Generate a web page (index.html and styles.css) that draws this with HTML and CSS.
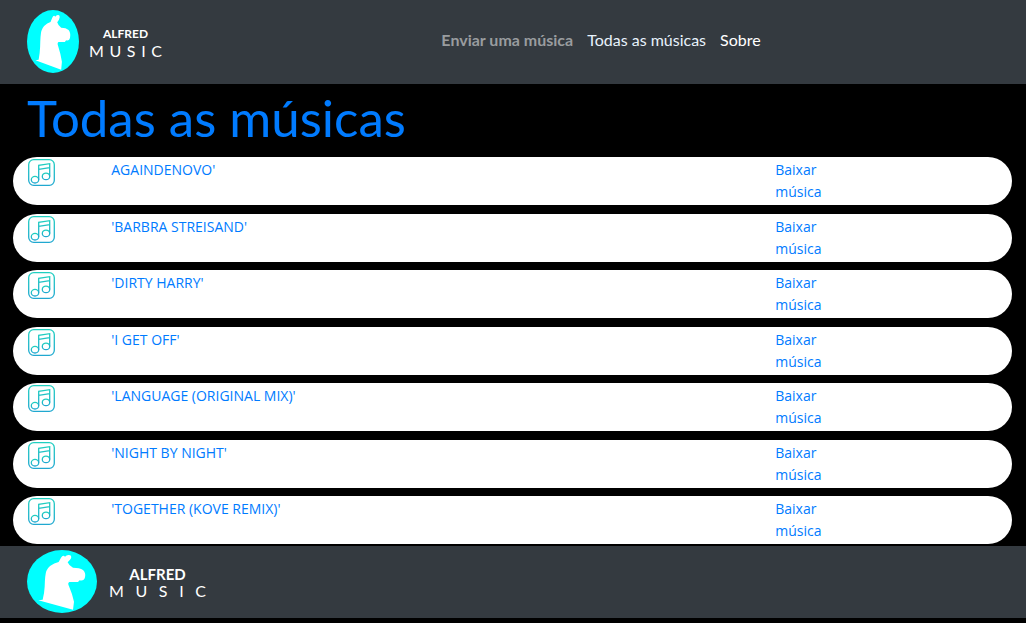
FILE: index.html
```
<!DOCTYPE html>
<html lang="pt-BR">
<head>
<meta charset="utf-8">
<meta name="viewport" content="width=device-width, initial-scale=1">
<title>Alfred Music</title>
<link rel="stylesheet" href="styles.css">
</head>
<body>
<svg class="symbols" aria-hidden="true">
  <defs>
    <linearGradient id="teal" x1="0" y1="0" x2="0" y2="1">
      <stop offset="0" stop-color="#20cfc0"/>
      <stop offset="1" stop-color="#20a8d0"/>
    </linearGradient>
    <symbol id="llama" viewBox="0 0 210 189" preserveAspectRatio="none">
      <ellipse cx="105" cy="94.5" rx="105" ry="94.5" fill="#00ffff"/>
      <path fill="#fff" d="M95 36 L102 23 Q108 14 114 20 Q120 13 130 16 Q136 22 129 29 L122 37 Q125 46 138 53 Q158 53 168 60 Q177 68 174 82 Q171 94 158 91 L153 96 H127 Q121 99 126 109 Q136 132 141 155 L138 179 L34 151 L47 149 Q52 130 53 110 Q54 74 58 63 Q66 44 95 36 Z"/>
    </symbol>
    <symbol id="note" viewBox="0 0 27 27">
      <g fill="none" stroke="url(#teal)" stroke-width="1.3">
        <rect x="0.7" y="0.7" width="25.6" height="25.6" rx="5"/>
        <ellipse cx="7" cy="20.7" rx="3.7" ry="3.3"/>
        <ellipse cx="18" cy="17.4" rx="3.7" ry="3.3"/>
        <path d="M10.7 20.7 V6.3 L21.7 4.7 V17.4 M10.7 10.3 L21.7 8.7"/>
      </g>
    </symbol>
  </defs>
</svg>

<header class="bar bar-top">
  <a class="brand" href="#" aria-label="Alfred Music">
    <svg class="mascot" aria-hidden="true"><use href="#llama"/></svg>
    <span class="wordmark"><span class="name">ALFRED</span><span class="tag"><span>M</span><span>U</span><span>S</span><span>I</span><span>C</span></span></span>
  </a>
  <nav class="nav">
    <a class="nav-link nav-send" href="#">Enviar uma música</a>
    <a class="nav-link nav-all" href="#">Todas as músicas</a>
    <a class="nav-link" href="#">Sobre</a>
  </nav>
</header>

<main class="content">
  <h1 class="title">Todas as músicas</h1>
  <ul class="songs">
    <li class="song"><svg class="note" aria-hidden="true"><use href="#note"/></svg><a class="song-name" href="#">AGAINDENOVO'</a><a class="download" href="#">Baixar música</a></li>
    <li class="song"><svg class="note" aria-hidden="true"><use href="#note"/></svg><a class="song-name" href="#">'BARBRA STREISAND'</a><a class="download" href="#">Baixar música</a></li>
    <li class="song"><svg class="note" aria-hidden="true"><use href="#note"/></svg><a class="song-name" href="#">'DIRTY HARRY'</a><a class="download" href="#">Baixar música</a></li>
    <li class="song"><svg class="note" aria-hidden="true"><use href="#note"/></svg><a class="song-name" href="#">'I GET OFF'</a><a class="download" href="#">Baixar música</a></li>
    <li class="song"><svg class="note" aria-hidden="true"><use href="#note"/></svg><a class="song-name" href="#">'LANGUAGE (ORIGINAL MIX)'</a><a class="download" href="#">Baixar música</a></li>
    <li class="song"><svg class="note" aria-hidden="true"><use href="#note"/></svg><a class="song-name" href="#">'NIGHT BY NIGHT'</a><a class="download" href="#">Baixar música</a></li>
    <li class="song"><svg class="note" aria-hidden="true"><use href="#note"/></svg><a class="song-name" href="#">'TOGETHER (KOVE REMIX)'</a><a class="download" href="#">Baixar música</a></li>
  </ul>
</main>

<footer class="bar bar-bottom">
  <a class="brand brand-wide" href="#" aria-label="Alfred Music">
    <svg class="mascot" aria-hidden="true"><use href="#llama"/></svg>
    <span class="wordmark"><span class="name">ALFRED</span><span class="tag"><span>M</span><span>U</span><span>S</span><span>I</span><span>C</span></span></span>
  </a>
</footer>
</body>
</html>
```
FILE: styles.css
```
* {
  box-sizing: border-box;
}

body {
  display: flex;
  flex-direction: column;
  min-height: 100vh;
  margin: 0;
  padding-bottom: 5px;
  background: #000;
  color: #007bff;
  font-family: "Trebuchet MS", Lato, sans-serif;
  font-size: 16px;
  line-height: 22px;
}

a {
  color: inherit;
  text-decoration: none;
}

.symbols {
  position: absolute;
  width: 0;
  height: 0;
}

.bar {
  display: flex;
  align-items: center;
  background: #343a40;
  color: #fff;
  padding-left: 27px;
}

.bar-top {
  padding-top: 10px;
  padding-bottom: 11px;
}

.bar-bottom {
  padding-top: 4px;
  padding-bottom: 5px;
}

.brand {
  display: flex;
  align-items: center;
  gap: 10px;
  margin-right: 14px;
}

.mascot {
  width: 52px;
  height: 63px;
}

.wordmark {
  display: flex;
  flex-direction: column;
  width: 73px;
  padding-top: 3px;
}

.name {
  font-size: 12px;
  font-weight: bold;
  line-height: 16px;
  text-align: center;
}

.tag {
  display: flex;
  justify-content: space-between;
  font-size: 16px;
  line-height: 18px;
}

.brand-wide {
  gap: 12px;
}

.brand-wide .mascot {
  width: 70px;
}

.brand-wide .wordmark {
  width: 97px;
}

.brand-wide .name {
  font-size: 15px;
}

.nav {
  display: flex;
  flex: 1;
  flex-wrap: wrap;
  justify-content: center;
  gap: 0 14px;
  padding-bottom: 3px;
}

.nav-send {
  color: #999c9f;
  font-weight: bold;
}

.nav-all {
  color: #e8f2fc;
}

.content {
  display: flex;
  flex: 1;
  flex-direction: column;
  padding: 0 14px 2px 13px;
}

.title {
  margin: 0;
  padding: 4px 14px 9px;
  font-size: 51px;
  font-weight: normal;
  line-height: 60px;
}

.songs {
  display: flex;
  flex: 1;
  flex-direction: column;
  justify-content: space-between;
  margin: 0;
  padding: 0;
  list-style: none;
  font-family: "Trebuchet MS", "Open Sans", sans-serif;
  font-size: 14px;
}

.song {
  display: grid;
  grid-template-columns: 1fr 8fr 1fr 2fr;
  align-items: start;
  padding: 2px 0;
  background: #fff;
  border-radius: 24px;
}

.note {
  width: 27px;
  height: 27px;
  margin-left: 15px;
}

.song-name {
  padding-left: 15px;
}

.download {
  padding: 0 13px;
}
```
